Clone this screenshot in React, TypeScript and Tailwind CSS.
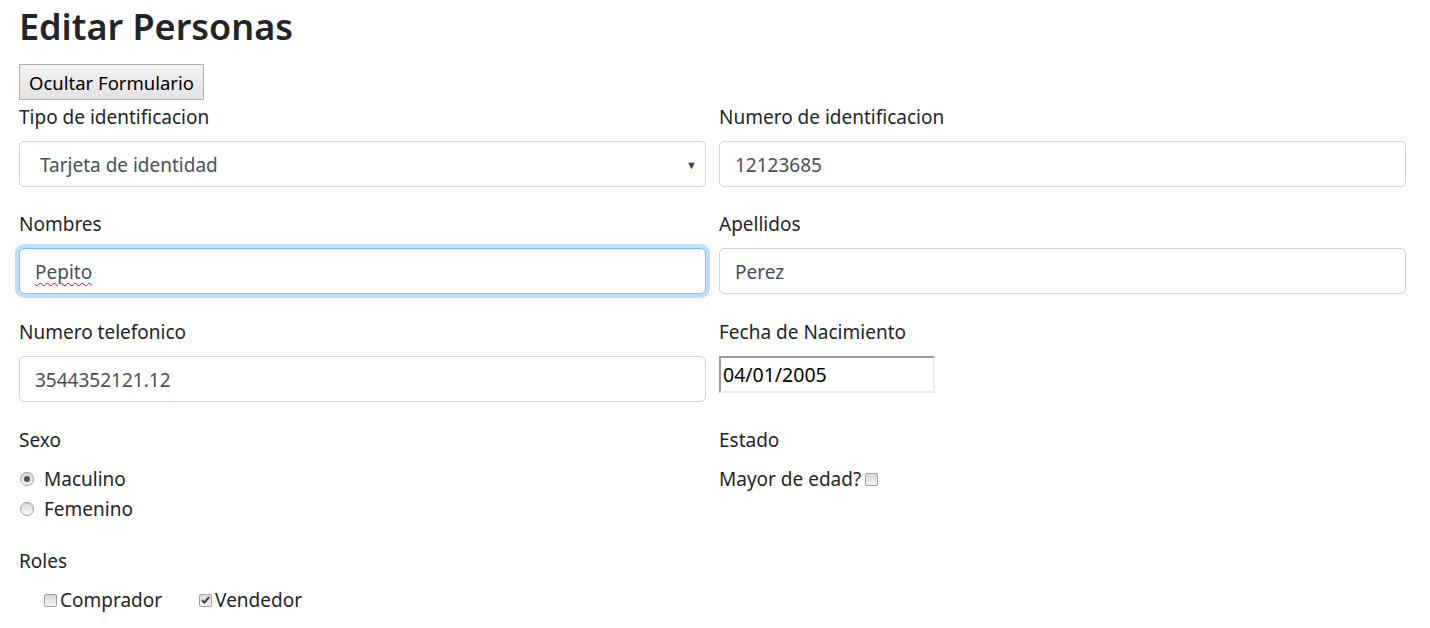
const font = { fontFamily: "'Noto Sans', 'Open Sans', sans-serif" };

function Label({ children }: { children: React.ReactNode }) {
  return (
    <div className="mb-[10px] h-[29px] pt-[1px] text-[19px] leading-[29px] text-[#212529]">
      {children}
    </div>
  );
}

function TextBox({
  value,
  focused = false,
  squiggle = false,
}: {
  value: string;
  focused?: boolean;
  squiggle?: boolean;
}) {
  return (
    <div
      className={`flex h-[46px] items-center rounded-[5px] border bg-white px-[15px] pt-[2px] text-[19px] text-[#495057] ${
        focused
          ? "border-[#80bdff] shadow-[0_0_0_4px_rgba(0,123,255,0.25)]"
          : "border-[#ced4da]"
      }`}
    >
      <span
        className={
          squiggle
            ? "underline decoration-[#e00] decoration-wavy decoration-1 underline-offset-[3px]"
            : ""
        }
      >
        {value}
      </span>
    </div>
  );
}

function Radio({ checked, label }: { checked?: boolean; label: string }) {
  return (
    <div className="flex h-[30px] items-center text-[19px] text-[#212529]">
      <span className="ml-[1px] flex h-[14px] w-[14px] items-center justify-center rounded-full border border-[#a0a0a0] bg-gradient-to-b from-[#d8d8d8] to-[#f6f6f6]">
        {checked && <span className="h-[6px] w-[6px] rounded-full bg-[#555]" />}
      </span>
      <span className="ml-[10px]">{label}</span>
    </div>
  );
}

function Check({ checked }: { checked?: boolean }) {
  return (
    <span className="inline-flex h-[13px] w-[13px] items-center justify-center rounded-[2px] border border-[#a0a0a0] bg-gradient-to-b from-[#d8d8d8] to-[#f4f4f4]">
      {checked && (
        <svg width="9" height="8" viewBox="0 0 9 8">
          <path d="M1 4.2 L3.4 6.6 L8 1.2" fill="none" stroke="#333" strokeWidth="1.8" />
        </svg>
      )}
    </span>
  );
}

export default function App() {
  return (
    <main className="min-h-screen bg-white pl-[19px] pr-[24px]" style={font}>
      <h1 className="pt-[5px] text-[36px] font-semibold leading-[43px] text-[#212529]">
        Editar Personas
      </h1>

      <button className="mt-[16px] h-[36px] w-[185px] border border-[#adadad] bg-gradient-to-b from-[#f2f2f2] to-[#e2e2e2] pt-[1px] text-[18.5px] text-black">
        Ocultar Formulario
      </button>

      <div className="mt-[2px] grid grid-cols-2 gap-x-[13px]">
        <div className="mb-[22px]">
          <Label>Tipo de identificacion</Label>
          <div className="flex h-[46px] items-center justify-between rounded-[5px] border border-[#ced4da] bg-white pl-[20px] pr-[8px] pt-[2px] text-[19px] text-[#495057]">
            <span>Tarjeta de identidad</span>
            <span className="text-[11px] text-[#444]">▼</span>
          </div>
        </div>
        <div className="mb-[22px]">
          <Label>Numero de identificacion</Label>
          <TextBox value="12123685" />
        </div>

        <div className="mb-[23px]">
          <Label>Nombres</Label>
          <TextBox value="Pepito" focused squiggle />
        </div>
        <div className="mb-[23px]">
          <Label>Apellidos</Label>
          <TextBox value="Perez" />
        </div>

        <div className="mb-[23px]">
          <Label>Numero telefonico</Label>
          <TextBox value="3544352121.12" />
        </div>
        <div className="mb-[23px]">
          <Label>Fecha de Nacimiento</Label>
          <div className="flex h-[37px] w-[216px] items-center border-2 border-b-[#ececec] border-l-[#9a9a9a] border-r-[#ececec] border-t-[#9a9a9a] pl-[2px] text-[19.5px] text-black">
            04/01/2005
          </div>
        </div>

        <div className="mb-[22px]">
          <Label>Sexo</Label>
          <Radio checked label="Maculino" />
          <Radio label="Femenino" />
        </div>
        <div className="mb-[22px]">
          <Label>Estado</Label>
          <div className="flex h-[30px] items-center text-[19px] text-[#212529]">
            <span>Mayor de edad?</span>
            <span className="ml-[4px] flex">
              <Check />
            </span>
          </div>
        </div>

        <div>
          <Label>Roles</Label>
          <div className="flex h-[30px] items-center pl-[25px] text-[19px] text-[#212529]">
            <Check />
            <span className="ml-[3px]">Comprador</span>
            <span className="ml-[37px] flex">
              <Check checked />
            </span>
            <span className="ml-[3px]">Vendedor</span>
          </div>
        </div>
      </div>
    </main>
  );
}
